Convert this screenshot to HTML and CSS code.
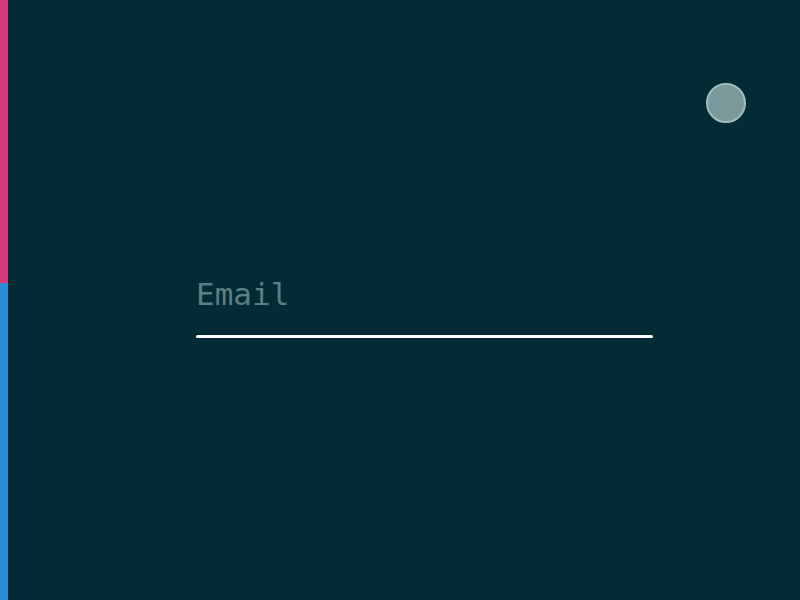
FILE: index.html
```html
<!DOCTYPE html>
<html>
<head>
<meta charset="utf-8">
<link rel="stylesheet" href="styles.css">
</head>
<body>
<div class="page">
  <div class="accent">
    <div class="accent-top"></div>
    <div class="accent-bottom"></div>
  </div>
  <main class="main">
    <div class="field">
      <label class="label">Email</label>
      <div class="underline"></div>
    </div>
  </main>
  <div class="dot"></div>
</div>
</body>
</html>
```
FILE: styles.css
```css
html, body {
  margin: 0;
  padding: 0;
  height: 100%;
  background: #022b36;
}
.page {
  position: relative;
  display: flex;
  height: 600px;
  width: 800px;
}
.accent {
  width: 8px;
  display: flex;
  flex-direction: column;
}
.accent-top {
  height: 283px;
  background: #d33a7b;
}
.accent-bottom {
  flex: 1;
  background: #2d8bd4;
}
.main {
  flex: 1;
  padding-left: 188px;
  padding-top: 274px;
}
.field {
  width: 457px;
}
.label {
  display: block;
  font-family: "DejaVu Sans Mono", monospace;
  font-size: 31px;
  line-height: 40px;
  color: #5d7e83;
}
.underline {
  margin-top: 21px;
  height: 3px;
  border-radius: 2px;
  background: #ffffff;
}
.dot {
  position: absolute;
  left: 706px;
  top: 83px;
  width: 36px;
  height: 36px;
  border-radius: 50%;
  background: #7a999b;
  border: 2px solid #a3bcbd;
}
```
